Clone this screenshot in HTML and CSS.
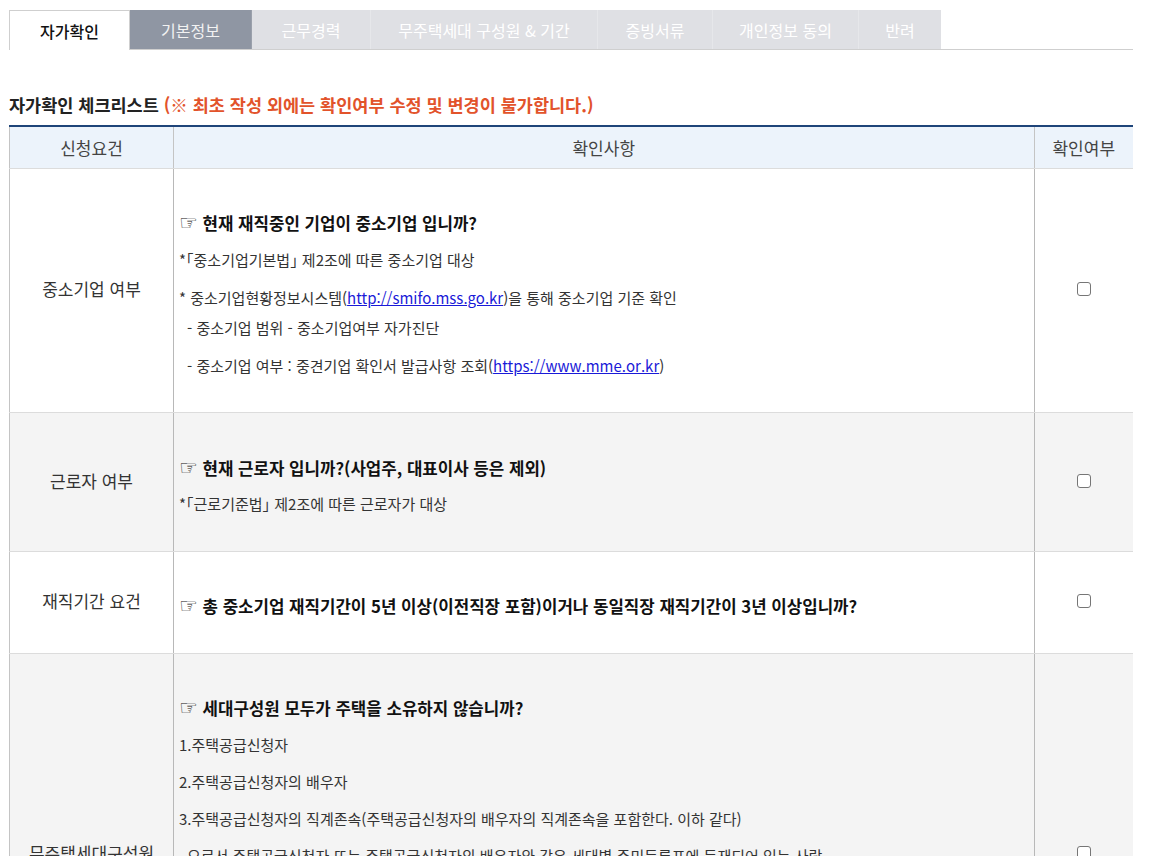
FILE: index.html
```html
<!DOCTYPE html>
<html lang="ko">
<head>
<meta charset="utf-8">
<title>자가확인</title>
<link rel="stylesheet" href="styles.css">
</head>
<body>
<div class="page">
  <div class="tabs">
    <div class="tab tab-active t1">자가확인</div>
    <div class="tab tab-done t2">기본정보</div>
    <div class="tab t3">근무경력</div>
    <div class="tab t4">무주택세대 구성원 &amp; 기간</div>
    <div class="tab t5">증빙서류</div>
    <div class="tab t6">개인정보 동의</div>
    <div class="tab t7">반려</div>
  </div>

  <h2 class="title">자가확인 체크리스트 <span class="warn">(※ 최초 작성 외에는 확인여부 수정 및 변경이 불가합니다.)</span></h2>

  <table class="check">
    <colgroup>
      <col class="c1"><col class="c2"><col class="c3">
    </colgroup>
    <thead>
      <tr>
        <th>신청요건</th>
        <th>확인사항</th>
        <th>확인여부</th>
      </tr>
    </thead>
    <tbody>
      <tr class="r1">
        <td class="label">중소기업 여부</td>
        <td class="content">
          <p class="q"><span class="hand">☞</span> 현재 재직중인 기업이 중소기업 입니까?</p>
          <p class="g15">*<span class="br">「</span>중소기업기본법<span class="br">」</span> 제2조에 따른 중소기업 대상</p>
          <p class="g16">* 중소기업현황정보시스템(<a href="#">http://smifo.mss.go.kr</a>)을 통해 중소기업 기준 확인</p>
          <p class="sub g8">- 중소기업 범위 - 중소기업여부 자가진단</p>
          <p class="sub g16">- 중소기업 여부 : 중견기업 확인서 발급사항 조회(<a href="#">https://www.mme.or.kr</a>)</p>
        </td>
        <td class="chk"><span class="box"></span></td>
      </tr>
      <tr class="r2 alt">
        <td class="label">근로자 여부</td>
        <td class="content">
          <p class="q"><span class="hand">☞</span> 현재 근로자 입니까?(사업주, 대표이사 등은 제외)</p>
          <p class="g14">*<span class="br">「</span>근로기준법<span class="br">」</span> 제2조에 따른 근로자가 대상</p>
        </td>
        <td class="chk"><span class="box"></span></td>
      </tr>
      <tr class="r3">
        <td class="label">재직기간 요건</td>
        <td class="content">
          <p class="q"><span class="hand">☞</span> 총 중소기업 재직기간이 5년 이상(이전직장 포함)이거나 동일직장 재직기간이 3년 이상입니까?</p>
        </td>
        <td class="chk"><span class="box"></span></td>
      </tr>
      <tr class="r4 alt">
        <td class="label">무주택세대구성원</td>
        <td class="content top">
          <p class="q"><span class="hand">☞</span> 세대구성원 모두가 주택을 소유하지 않습니까?</p>
          <p class="g15">1.주택공급신청자</p>
          <p class="g15">2.주택공급신청자의 배우자</p>
          <p class="g15">3.주택공급신청자의 직계존속(주택공급신청자의 배우자의 직계존속을 포함한다. 이하 같다)</p>
          <p class="g15 sub">으로서 주택공급신청자 또는 주택공급신청자의 배우자와 같은 세대별 주민등록표에 등재되어 있는 사람</p>
          <p class="g15">4.주택공급신청자의 직계비속(직계비속의 배우자를 포함한다. 이하 같다)</p>
          <p class="g15 sub">으로서 주택공급신청자와 같은 세대별 주민등록표에 등재되어 있는 사람</p>
        </td>
        <td class="chk"><span class="box"></span></td>
      </tr>
    </tbody>
  </table>
</div>
</body>
</html>
```

FILE: styles.css
```css
* { box-sizing: border-box; }

body {
  margin: 0;
  font-family: "Noto Sans CJK KR", "Noto Sans", sans-serif;
  color: #333;
  background: #fff;
}

.page {
  padding: 10px 36px 0 9px;
}

/* tabs */
.tabs {
  display: flex;
  height: 40px;
  border-bottom: 1px solid #cfcfcf;
}

.tab {
  height: 39px;
  display: flex;
  align-items: center;
  justify-content: center;
  font-size: 16px;
  color: #fff;
  background: #dfe0e4;
  border-right: 1px solid #e6e7ea;
}

.tab-active {
  background: #fff;
  color: #111;
  font-weight: 500;
  border: 1px solid #cfcfcf;
  border-bottom: none;
  height: 40px;
}

.tab-done {
  background: #8f96a3;
  color: #f2f2f2;
  border-right: 1px solid #9aa0ab;
}

.t1 { width: 121px; }
.t2 { width: 122px; }
.t3 { width: 119px; }
.t4 { width: 227px; }
.t5 { width: 115px; }
.t6 { width: 146px; }
.t7 { width: 82px; border-right: none; }

/* title */
.title {
  margin: 44px 0 0;
  font-size: 17.5px;
  line-height: 22px;
  font-weight: 700;
  color: #222;
}

.warn {
  color: #e2532b;
}

/* table */
.check {
  width: 100%;
  margin-top: 9px;
  border-collapse: collapse;
  border-top: 2px solid #1e4479;
  table-layout: fixed;
}

.c1 { width: 164px; }
.c3 { width: 99px; }

.check th {
  height: 42px;
  background: #ecf3fb;
  font-weight: 400;
  font-size: 17px;
  color: #444;
  border-bottom: 1px solid #dcdcdc;
  border-left: 1px solid #c4c4c4;
  padding: 0;
}

.check td {
  border-bottom: 1px solid #dcdcdc;
  border-left: 1px solid #b8b8b8;
  padding: 0;
  vertical-align: middle;
}

.check tr > :first-child {
  border-left: 1px solid #c4c4c4;
}

.alt td { background: #f4f4f4; }

.r1 { height: 244px; }
.r2 { height: 139px; }
.r3 { height: 102px; }
.r4 { height: 402px; }

.label {
  text-align: center;
  font-size: 17px;
  color: #333;
  padding-bottom: 3px !important;
}

.content {
  padding: 8px 5px 0 5px !important;
  font-size: 15px;
  color: #333;
}

.content.top {
  vertical-align: top !important;
  padding-top: 43px !important;
}

.content p {
  margin: 0;
  line-height: 22px;
  height: 22px;
  white-space: nowrap;
}

.content .q {
  font-size: 16.8px;
  font-weight: 700;
  color: #111;
}

.hand {
  font-family: "DejaVu Sans", sans-serif;
  font-weight: 400;
  font-size: 21px;
  line-height: 1;
  color: #111;
}

.br {
  font-feature-settings: "halt";
}

.g8 { margin-top: 8px !important; }
.g14 { margin-top: 14px !important; }
.g15 { margin-top: 15px !important; }
.g16 { margin-top: 16px !important; }

.sub { padding-left: 8px; }

.content a {
  color: #1a1ad8;
  text-decoration: underline;
}

.chk {
  text-align: center;
}

.box {
  display: block;
  margin: 0 auto 2px;
  width: 14px;
  height: 14px;
  border: 1px solid #767676;
  border-radius: 3px;
  background: #fff;
}
```
